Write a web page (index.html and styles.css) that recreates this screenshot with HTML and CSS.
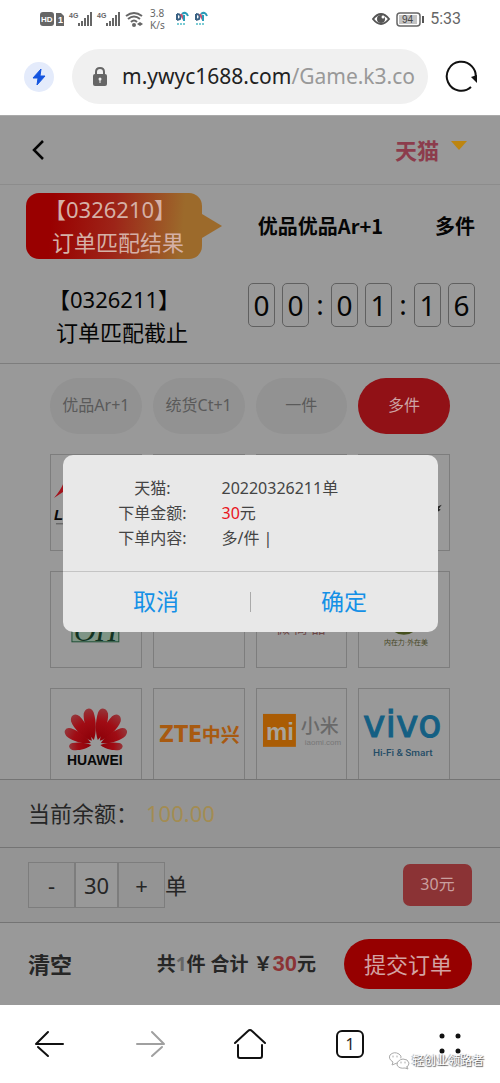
FILE: index.html
```html
<!DOCTYPE html>
<html lang="zh-CN">
<head>
  <meta charset="UTF-8" />
  <meta name="viewport" content="width=device-width, initial-scale=1.0" />
  <title>订单确认</title>
  <link rel="stylesheet" href="styles.css">
</head>

<body>
  <!-- phone status bar -->
  <div class="status">
    <svg class="status-icons" width="106" height="24" viewBox="0 0 106 24">
      <rect x="1" y="5" width="14" height="14" rx="3" fill="#666" />
      <text x="2" y="15" font-size="8" font-weight="bold" fill="#fff">HD</text>
      <path d="M17 6h5l3 3v10h-8z" fill="#666" />
      <text x="19" y="16" font-size="9" font-weight="bold" fill="#fff">1</text>
      <g fill="#666">
        <text x="30" y="11" font-size="7" font-weight="bold">4G</text>
        <path d="M39 16h2v3h-2zM42 14h2v5h-2zM45 11h2v8h-2zM48 8h2v11h-2zM51 5h2v14h-2z" />
        <text x="58" y="11" font-size="7" font-weight="bold">4G</text>
        <path d="M67 16h2v3h-2zM70 14h2v5h-2zM73 11h2v8h-2zM76 8h2v11h-2zM79 5h2v14h-2z" />
        <circle cx="95" cy="18" r="2" />
        <path d="M98 17l3-2v4zM104 17l-3-2v4z" />
      </g>
      <path d="M87 9q8-6 16 0M89 12q6-5 12 0M92 15q3-3 6 0" fill="none" stroke="#666" stroke-width="2" />
    </svg>
    <div class="speed">3.8<br>K/s</div>
    <svg class="app-icons" width="34" height="16" viewBox="0 0 34 16">
      <g id="appmark" fill="none">
        <path d="M2 3v6M2 3q5 0 3 5L2 9" stroke="#3a6284" stroke-width="2" />
        <path d="M6 3l3 6" stroke="#c8506e" stroke-width="2" />
        <path d="M9 10V4M7 3q4-3 6 2" stroke="#2b9bb8" stroke-width="2" />
        <path d="M2 13h9" stroke="#7bcbd4" stroke-width="2" stroke-dasharray="2 1" />
      </g>
      <use href="#appmark" x="19" />
    </svg>
    <svg class="status-right" width="54" height="20" viewBox="0 0 54 20">
      <path d="M1 10q8-10 16 0q-8 10-16 0z" fill="none" stroke="#555" stroke-width="2" />
      <circle cx="9" cy="10" r="4" fill="#555" />
      <circle cx="11" cy="8" r="1.5" fill="#fff" />
      <rect x="25" y="4" width="23" height="13" rx="3" fill="none" stroke="#666" stroke-width="1.5" />
      <rect x="27" y="6" width="18" height="9" fill="#c4c4c4" />
      <text x="30" y="14" font-size="10" fill="#444">94</text>
      <path d="M51 7v7" stroke="#555" stroke-width="2" />
    </svg>
    <time class="clock">5:33</time>
  </div>

  <!-- browser address bar -->
  <div class="address">
    <button class="bolt" aria-label="加速">
      <svg width="30" height="30" viewBox="0 0 30 30"><path d="M17 7L9 16h5l-1 7 8-9h-5z" fill="#1455e0" stroke="#1455e0" stroke-linejoin="round" /></svg>
    </button>
    <div class="url">
      <svg class="lock" width="14" height="20" viewBox="0 0 14 20">
        <path d="M3 9V5q0-4 4-4t4 4v4" fill="none" stroke="#666" stroke-width="2" />
        <rect x="0" y="7" width="14" height="12" rx="2" fill="#666" />
        <circle cx="7" cy="12" r="1.5" fill="#f0f0f0" /><path d="M7 12v4" stroke="#f0f0f0" />
      </svg>
      <span>m.ywyc1688.com<i>/Game.k3.co</i></span>
    </div>
    <button class="reload" aria-label="刷新">
      <svg width="34" height="34" viewBox="0 0 34 34">
        <path d="M27 27A14.500 14.500 0 1 1 31.500 19" fill="none" stroke="#111" stroke-width="2" />
        <path d="M27 17l6-2v8z" fill="#111" />
      </svg>
    </button>
  </div>

  <main class="app">
    <header class="app-header">
      <button class="back" aria-label="返回">
        <svg width="14" height="22" viewBox="0 0 14 22"><path d="M12 2L3 11l9 9" fill="none" stroke="#050505" stroke-width="2.500" /></svg>
      </button>
      <button class="shop">天猫 <span class="caret"></span></button>
    </header>

    <section class="rounds">
      <div class="round">
        <div class="issue bubble">
          <div>【0326210】</div>
          <div class="issue-note">订单匹配结果</div>
          <svg class="bubble-tip" width="20" height="24" viewBox="0 0 20 24"><path d="M0 0L20 12 0 24z" fill="#9c6a2b" /></svg>
        </div>
        <div class="result"><b>优品优品Ar+1</b><b>多件</b></div>
      </div>
      <div class="round current">
        <div class="issue">
          <div>【0326211】</div>
          <div class="issue-note">订单匹配截止</div>
        </div>
        <div class="timer">
          <span class="digit">0</span><span class="digit">0</span><span class="colon">:</span>
          <span class="digit">0</span><span class="digit">1</span><span class="colon">:</span>
          <span class="digit">1</span><span class="digit">6</span>
        </div>
      </div>
    </section>

    <section class="goods">
      <div class="grid chips">
        <button class="chip">优品Ar+1</button>
        <button class="chip">统货Ct+1</button>
        <button class="chip">一件</button>
        <button class="chip active">多件</button>
      </div>
      <div class="grid brands">
        <div class="brand">
          <svg viewBox="0 0 90 95">
            <path d="M3 43Q10 35 13 27L60 27Q25 30 12 37z" fill="#a3131c" />
            <text x="3" y="65" font-size="15" font-weight="bold" font-style="italic" fill="#080808">LI-NING</text>
            <path d="M5 69h70" stroke="#555" />
          </svg>
        </div>
        <div class="brand"></div>
        <div class="brand"></div>
        <div class="brand">
          <svg viewBox="0 0 90 95"><path d="M70 55q9-3 13-5l-3 4 2 1-6 4z" fill="#222" /></svg>
        </div>
        <div class="brand">
          <svg viewBox="0 0 90 95">
            <rect x="21" y="38" width="47" height="32" fill="#7e9586" stroke="#1f4f35" />
            <text class="serif" x="23" y="69" font-size="30" font-style="italic" fill="#123322">OH</text>
          </svg>
        </div>
        <div class="brand"></div>
        <div class="brand">
          <svg viewBox="0 0 90 95"><text x="19" y="61" font-size="14" fill="#6b4646">微 商 品</text></svg>
        </div>
        <div class="brand">
          <svg viewBox="0 0 90 95">
            <ellipse cx="45" cy="53" rx="13" ry="10" fill="#46501f" />
            <text class="serif" x="25" y="73" font-size="7" fill="#46461f">内在力·外在美</text>
          </svg>
        </div>
        <div class="brand">
          <svg viewBox="0 0 90 95">
            <defs>
              <linearGradient id="shade" x1="0" y1="0" x2="0" y2="1">
                <stop offset="0" stop-color="#94373b" />
                <stop offset="0.4" stop-color="#a00c14" />
                <stop offset="1" stop-color="#8c0008" />
              </linearGradient>
              <path id="petal" d="M0 -5C-6 -13 -7 -26 -5 -33Q-3 -37 0 -37Q4 -37 5 -32C6 -22 4 -12 0 -5z" fill="url(#shade)" />
            </defs>
            <g id="fan" transform="translate(44 56)">
              <use href="#petal" transform="rotate(-11)" />
              <use href="#petal" transform="rotate(-37)" />
              <use href="#petal" transform="rotate(-64) scale(0.9)" />
              <use href="#petal" transform="rotate(-94) scale(0.7)" />
            </g>
            <use href="#fan" transform="translate(90) scale(-1 1)" />
            <text x="16" y="76" font-size="14" font-weight="bold" fill="#080808">HUAWEI</text>
          </svg>
        </div>
        <div class="brand">
          <svg viewBox="0 0 90 95">
            <text class="narrow" x="5" y="53" font-size="23" font-weight="bold" fill="#a85a10">ZTE</text>
            <text class="cjk" x="48" y="53" font-size="19" font-weight="bold" fill="#a85a10">中兴</text>
          </svg>
        </div>
        <div class="brand">
          <svg viewBox="0 0 90 95">
            <rect x="6" y="25" width="33" height="33" fill="#aa5c04" />
            <text x="9" y="51" font-size="24" font-weight="bold" fill="#a8a49c">mi</text>
            <text class="cjk" x="44" y="44" font-size="19" font-weight="500" fill="#696969">小米</text>
            <text x="48" y="56" font-size="8" fill="#777">iaomi.com</text>
          </svg>
        </div>
        <div class="brand">
          <svg viewBox="0 0 90 95">
            <text class="wide" x="4" y="48" font-size="38" fill="#145f83" stroke="#145f83">vivo</text>
            <text class="roboto" x="14" y="67" font-size="10" font-weight="500" fill="#244c66">Hi-Fi &amp; Smart</text>
          </svg>
        </div>
      </div>
    </section>

    <section class="bar balance">
      <span>当前余额：</span><span class="money">100.00</span>
    </section>

    <section class="bar amount">
      <div class="stepper">
        <button aria-label="减少">-</button>
        <input type="text" value="30" aria-label="单数">
        <button aria-label="增加">+</button>
      </div>
      <span>单</span>
      <button class="price">30元</button>
    </section>

    <footer class="bar checkout">
      <button class="clear">清空</button>
      <div class="total">共<em>1</em>件 合计 ￥<strong>30</strong>元</div>
      <button class="submit">提交订单</button>
    </footer>

    <!-- confirm dialog over the page -->
    <div class="overlay">
      <div class="dialog" role="dialog" aria-label="确认订单">
        <dl class="details">
          <dt>天猫:</dt><dd>20220326211单</dd>
          <dt>下单金额:</dt><dd><span class="red">30</span>元</dd>
          <dt>下单内容:</dt><dd>多/件 |</dd>
        </dl>
        <div class="actions">
          <button>取消</button>
          <span class="split"></span>
          <button>确定</button>
        </div>
      </div>
    </div>
  </main>

  <nav class="nav">
    <button aria-label="后退"><svg width="32" height="32" viewBox="0 0 32 32"><path d="M2 16h27M14 4L2 16M4 19l10 9" /></svg></button>
    <button class="off" aria-label="前进"><svg width="32" height="32" viewBox="0 0 32 32"><path d="M3 16h27M18 4l12 12M28 19l-10 9" /></svg></button>
    <button aria-label="主页"><svg width="32" height="32" viewBox="0 0 32 32"><path d="M1 15L14 3q2-2 4 0l13 12M4 17v11q0 2 2 2h20q2 0 2-2V17" /></svg></button>
    <button aria-label="标签页"><span class="tabs">1</span></button>
    <button aria-label="菜单"><svg class="dots" width="32" height="32" viewBox="0 0 32 32"><circle cx="8" cy="8" r="2.500" /><circle cx="24" cy="8" r="2.500" /><circle cx="8" cy="23" r="2.500" /><circle cx="24" cy="23" r="2.500" /></svg></button>
    <div class="watermark">
      <svg width="22" height="18" viewBox="0 0 22 18">
        <path d="M9 11l-5 2 1-3Q0 7 2 3q4-4 9-1 3 2 2 4" />
        <path d="M19 15l1 2-3-1q-6 1-8-3 0-5 6-6 5 0 6 4 0 2-2 4z" />
        <path d="M5 4v1M9 4v1M13 10v1M17 10v1" />
      </svg>
      轻创业领路者
    </div>
  </nav>
</body>
</html>
```
FILE: styles.css
```css
* {
  box-sizing: border-box;
}
body {
  margin: 0;
  height: 100vh;
  display: flex;
  flex-direction: column;
  background: #fff;
  color: #262626;
  font-family: 'Noto Sans', 'Noto Sans CJK SC', sans-serif;
  font-size: 22px;
  line-height: 1.2;
}
button, input {
  font: inherit;
  color: inherit;
  background: none;
  border: none;
  padding: 0;
  margin: 0;
}
svg {
  display: block;
}
svg text {
  font-family: 'Liberation Sans', 'Noto Sans CJK SC', sans-serif;
}
svg .serif {
  font-family: 'Liberation Serif', 'Noto Sans CJK SC', serif;
}
svg .narrow {
  font-family: 'DejaVu Sans Condensed', 'DejaVu Sans', sans-serif;
  font-stretch: normal;
}
svg .wide {
  font-family: 'DejaVu Sans', sans-serif;
}
svg .roboto {
  font-family: Roboto, sans-serif;
}
svg .cjk {
  font-family: 'Noto Sans CJK SC', sans-serif;
}

/* status bar */
.status {
  display: flex;
  align-items: center;
  height: 38px;
  padding: 0 39px;
  color: #666;
}
.speed {
  margin-left: 5px;
  font-size: 10px;
  line-height: 12px;
}
.app-icons {
  margin-left: 10px;
}
.status-right {
  margin-left: auto;
}
.clock {
  margin-left: 4px;
  font-family: Roboto, sans-serif;
  font-size: 16px;
}

/* address bar */
.address {
  display: flex;
  align-items: center;
  height: 77px;
  padding: 0 22px 0 24px;
}
.bolt {
  width: 30px;
  height: 30px;
  border-radius: 50%;
  background: #e4ebfb;
}
.url {
  flex: 1;
  min-width: 0;
  display: flex;
  align-items: center;
  gap: 15px;
  height: 55px;
  margin: 0 16px 0 18px;
  padding-left: 21px;
  border-radius: 28px;
  background: #f0f0f0;
  color: #222;
  font-size: 21px;
  white-space: nowrap;
}
.lock {
  flex-shrink: 0;
}
.url i {
  font-style: normal;
  color: #999;
}

/* page */
.app {
  position: relative;
  flex: 1;
  min-height: 0;
  display: flex;
  flex-direction: column;
  background: #999;
}
.app-header {
  display: flex;
  justify-content: space-between;
  align-items: center;
  height: 70px;
  padding: 0 33px 0 31px;
  border-top: 1px solid #aaa;
  border-bottom: 1px solid #8c8c8c;
}
.shop {
  display: flex;
  align-items: center;
  gap: 12px;
  color: #8c3c4c;
  font-weight: bold;
}
.caret {
  margin-bottom: 8px;
  border: 8px solid transparent;
  border-top: 9px solid #bd8510;
  border-bottom: 0;
}
.rounds {
  display: flex;
  flex-direction: column;
  gap: 24px;
  padding: 8px 25px 14px 26px;
  border-bottom: 1px solid #7d7d7d;
  color: #050505;
}
.round {
  display: flex;
  justify-content: space-between;
  align-items: center;
}
.round.current {
  align-items: flex-start;
}
.issue {
  width: 176px;
  padding-left: 22px;
  line-height: 33px;
}
.issue-note {
  padding-left: 8px;
}
.bubble {
  position: relative;
  padding-left: 18px;
  border-radius: 13px;
  background: linear-gradient(95deg, #990000 15%, #9d2418 50%, #9c6a2b 88%);
  color: #d5b0a6;
}
.bubble-tip {
  position: absolute;
  left: 100%;
  top: 21px;
}
.result {
  display: flex;
  gap: 52px;
  font-family: 'Noto Sans CJK SC', sans-serif;
  font-size: 20px;
}
.timer {
  display: flex;
  gap: 7px;
  font-size: 28px;
  line-height: 42px;
  text-align: center;
}
.digit {
  width: 27px;
  border: 1px solid #606060;
  border-radius: 5px;
}
.colon {
  width: 8px;
}

.goods {
  flex: 1;
  min-height: 0;
  overflow: hidden;
  padding: 14px 10% 0;
}
.grid {
  display: grid;
  grid-template-columns: repeat(4, 1fr);
  gap: 20px 11px;
}
.chip {
  height: 56px;
  border-radius: 28px;
  background: #929292;
  color: #5a5a5a;
  font-size: 16px;
}
.chip.active {
  background: #911116;
  color: #cda4a5;
}
.brands {
  margin-top: 20px;
}
.brand {
  height: 97px;
  border: 1px solid #7d7d7d;
}

/* bottom bars */
.bar {
  display: flex;
  align-items: center;
  padding: 0 28px;
  border-top: 1px solid #747474;
  background: #949494;
}
.balance {
  height: 68px;
}
.money {
  margin-left: 8px;
  color: #a38c52;
}
.amount {
  height: 75px;
}
.stepper {
  display: flex;
  height: 46px;
  border: 1px solid #7d7d7d;
}
.stepper button, .stepper input {
  width: 45px;
  text-align: center;
}
.stepper input {
  border: solid #7d7d7d;
  border-width: 0 2px;
  background: #999;
}
.price {
  width: 69px;
  height: 42px;
  margin-left: auto;
  border-radius: 7px;
  background: #8b3335;
  color: #c99f9f;
  font-size: 16px;
}
.checkout {
  justify-content: space-between;
  height: 83px;
  background: #999;
}
.clear {
  font-weight: bold;
}
.total {
  margin-left: auto;
  margin-right: 28px;
  font-size: 19px;
  font-weight: bold;
}
.total em {
  font-style: normal;
  color: #666;
}
.total strong {
  font-family: 'Liberation Sans', sans-serif;
  font-size: 22px;
  color: #8b3335;
}
.submit {
  width: 128px;
  height: 50px;
  border-radius: 25px;
  background: #960000;
  color: #d3a3a3;
}

/* dialog */
.overlay {
  position: absolute;
  inset: 0;
  display: flex;
  align-items: center;
  justify-content: center;
  padding-bottom: 33px;
}
.dialog {
  width: 75%;
  border-radius: 10px;
  background: #e8e8e8;
  color: #444;
}
.details {
  display: grid;
  grid-template-columns: 70px 1fr;
  column-gap: 34px;
  margin: 0;
  padding: 21px 55px 20px;
  font-size: 16px;
  line-height: 25px;
}
.details dt {
  text-align: center;
  white-space: nowrap;
}
.details dd {
  margin: 0;
}
.red {
  color: #e8141c;
}
.actions {
  display: flex;
  align-items: center;
  height: 61px;
  border-top: 1px solid #c4c4c4;
  color: #1490e6;
  font-size: 23px;
}
.actions button {
  flex: 1;
  height: 100%;
}
.split {
  width: 1px;
  height: 20px;
  background: #aaa;
}

/* browser toolbar */
.nav {
  position: relative;
  display: flex;
  align-items: center;
  height: 78px;
}
.nav button {
  flex: 1;
  display: flex;
  justify-content: center;
}
.nav svg {
  fill: none;
  stroke: #111;
  stroke-width: 2;
  stroke-linecap: round;
}
.nav .off svg {
  stroke: #a0a0a0;
}
.nav .dots {
  fill: #111;
  stroke: none;
}
.tabs {
  width: 28px;
  height: 28px;
  border: 2px solid #111;
  border-radius: 6px;
  font-size: 16px;
  line-height: 24px;
}
.watermark {
  position: absolute;
  right: 16px;
  bottom: 13px;
  display: flex;
  align-items: center;
  gap: 2px;
  color: #fff;
  font-size: 12px;
  line-height: 18px;
  text-shadow: 1px 1px 1px #555, -1px 0 1px #999;
}
.nav .watermark svg {
  stroke: #aaa;
  stroke-width: 1;
}
```
